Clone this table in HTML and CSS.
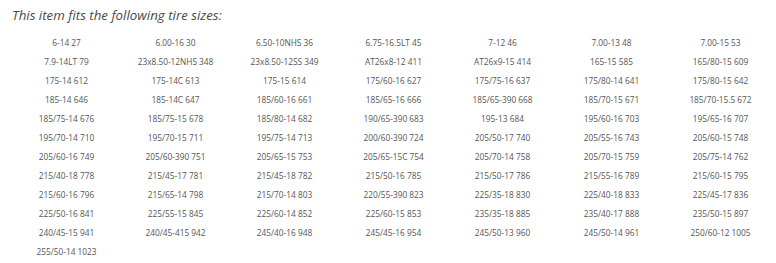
FILE: index.html
```html
<!DOCTYPE html>
<html lang="en">
<head>
    <meta charset="UTF-8">
    <meta name="viewport" content="width=device-width, initial-scale=1.0">
    <title>Tire Fitment</title>
    <link rel="stylesheet" href="styles.css">
</head>
<body>
    <div class="fitment">
        <h3 class="fitment-title">This item fits the following tire sizes:</h3>
        <ul class="size-list">
            <li>6-14 27</li>
            <li>6.00-16 30</li>
            <li>6.50-10NHS 36</li>
            <li>6.75-16.5LT 45</li>
            <li>7-12 46</li>
            <li>7.00-13 48</li>
            <li>7.00-15 53</li>
            <li>7.9-14LT 79</li>
            <li>23x8.50-12NHS 348</li>
            <li>23x8.50-12SS 349</li>
            <li>AT26x8-12 411</li>
            <li>AT26x9-15 414</li>
            <li>165-15 585</li>
            <li>165/80-15 609</li>
            <li>175-14 612</li>
            <li>175-14C 613</li>
            <li>175-15 614</li>
            <li>175/60-16 627</li>
            <li>175/75-16 637</li>
            <li>175/80-14 641</li>
            <li>175/80-15 642</li>
            <li>185-14 646</li>
            <li>185-14C 647</li>
            <li>185/60-16 661</li>
            <li>185/65-16 666</li>
            <li>185/65-390 668</li>
            <li>185/70-15 671</li>
            <li>185/70-15.5 672</li>
            <li>185/75-14 676</li>
            <li>185/75-15 678</li>
            <li>185/80-14 682</li>
            <li>190/65-390 683</li>
            <li>195-13 684</li>
            <li>195/60-16 703</li>
            <li>195/65-16 707</li>
            <li>195/70-14 710</li>
            <li>195/70-15 711</li>
            <li>195/75-14 713</li>
            <li>200/60-390 724</li>
            <li>205/50-17 740</li>
            <li>205/55-16 743</li>
            <li>205/60-15 748</li>
            <li>205/60-16 749</li>
            <li>205/60-390 751</li>
            <li>205/65-15 753</li>
            <li>205/65-15C 754</li>
            <li>205/70-14 758</li>
            <li>205/70-15 759</li>
            <li>205/75-14 762</li>
            <li>215/40-18 778</li>
            <li>215/45-17 781</li>
            <li>215/45-18 782</li>
            <li>215/50-16 785</li>
            <li>215/50-17 786</li>
            <li>215/55-16 789</li>
            <li>215/60-15 795</li>
            <li>215/60-16 796</li>
            <li>215/65-14 798</li>
            <li>215/70-14 803</li>
            <li>220/55-390 823</li>
            <li>225/35-18 830</li>
            <li>225/40-18 833</li>
            <li>225/45-17 836</li>
            <li>225/50-16 841</li>
            <li>225/55-15 845</li>
            <li>225/60-14 852</li>
            <li>225/60-15 853</li>
            <li>235/35-18 885</li>
            <li>235/40-17 888</li>
            <li>235/50-15 897</li>
            <li>240/45-15 941</li>
            <li>240/45-415 942</li>
            <li>245/40-16 948</li>
            <li>245/45-16 954</li>
            <li>245/50-13 960</li>
            <li>245/50-14 961</li>
            <li>250/60-12 1005</li>
            <li>255/50-14 1023</li>
        </ul>
    </div>
</body>
</html>
```

FILE: styles.css
```css
body, html {
    margin: 0;
    background-color: #ffffff;
    font-family: 'Open Sans', Arial, sans-serif;
}

.fitment {
    padding: 6px 1px 0 12px;
}

.fitment-title {
    margin: 0 0 8px 0;
    font-size: 13.3px;
    font-style: italic;
    font-weight: normal;
    color: #4a4a4a;
    line-height: 19px;
}

.size-list {
    list-style: none;
    margin: 0;
    padding: 0;
    display: grid;
    grid-template-columns: repeat(7, 1fr);
}

.size-list li {
    text-align: center;
    font-size: 8.3px;
    line-height: 19px;
    color: #555;
    white-space: nowrap;
}
```
